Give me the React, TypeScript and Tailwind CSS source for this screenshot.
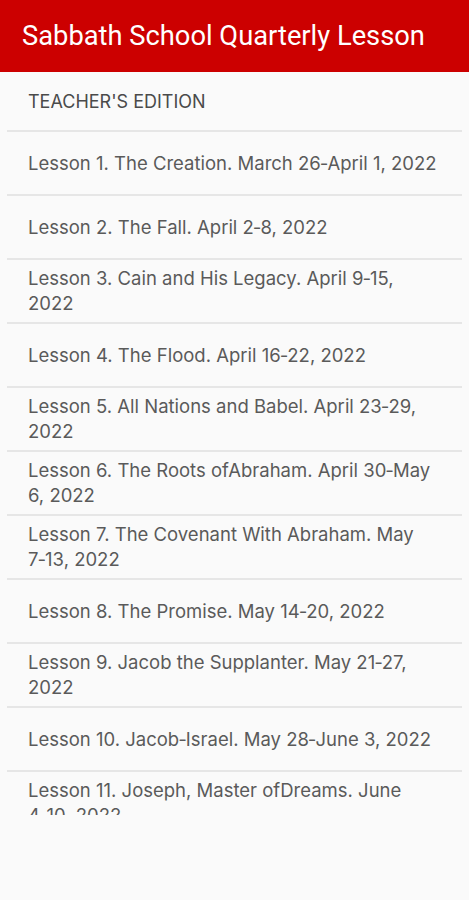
const LESSONS = [
  "Lesson 1. The Creation. March 26\u2011April 1, 2022",
  "Lesson 2. The Fall. April 2\u20118, 2022",
  "Lesson 3. Cain and His Legacy. April 9\u201115, 2022",
  "Lesson 4. The Flood. April 16\u201122, 2022",
  "Lesson 5. All Nations and Babel. April 23\u201129, 2022",
  "Lesson 6. The Roots ofAbraham. April 30\u2011May 6, 2022",
  "Lesson 7. The Covenant With Abraham. May 7\u201113, 2022",
  "Lesson 8. The Promise. May 14\u201120, 2022",
  "Lesson 9. Jacob the Supplanter. May 21\u201127, 2022",
  "Lesson 10. Jacob\u2011Israel. May 28\u2011June 3, 2022",
  "Lesson 11. Joseph, Master ofDreams. June 4\u201110, 2022",
  "Lesson 12. Joseph, Prince of Egypt. June 11\u201117, 2022",
  "Lesson 13. Israel in Egypt. June 18\u201124, 2022",
];

export default function App() {
  return (
    <div className="h-[900px] w-full bg-[#fafafa] font-['Inter',sans-serif]">
      {/* App bar */}
      <header className="flex h-[72px] items-center bg-[#cc0000] px-[22px]">
        <h1 className="font-['Roboto',sans-serif] text-[27.3px] font-normal text-white">
          Sabbath School Quarterly Lesson
        </h1>
      </header>

      {/* Lesson list, clipped like a scrolling view */}
      <div className="h-[743px] overflow-hidden px-[7px]">
        <div className="flex h-[60px] items-center border-b-2 border-[#e6e6e6] pl-[21px] pr-5">
          <span className="text-[18px] uppercase text-[#4a4a4a]">
            Teacher's Edition
          </span>
        </div>
        {LESSONS.map((title) => (
          <div
            key={title}
            className="flex h-[64px] items-center border-b-2 border-[#e6e6e6] pl-[21px] pr-5"
          >
            <span className="text-[18.5px] leading-[25px] text-[#5a5a5a]">
              {title}
            </span>
          </div>
        ))}
      </div>
    </div>
  );
}
